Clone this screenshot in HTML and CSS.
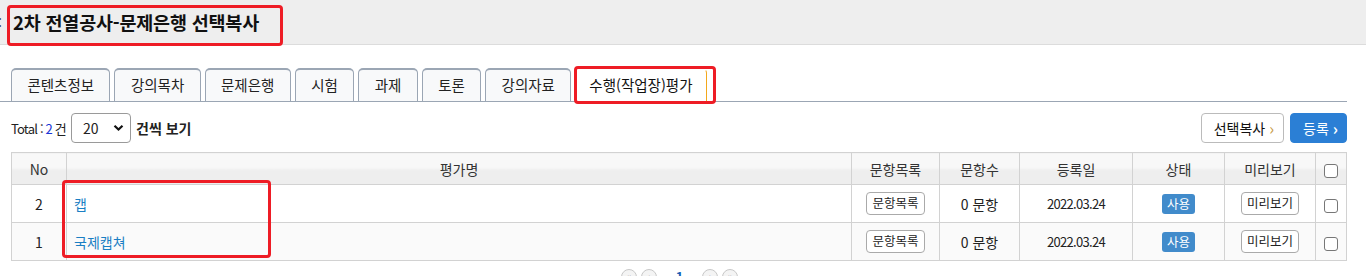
FILE: index.html
```html
<!DOCTYPE html>
<html lang="ko">
<head>
  <meta charset="utf-8">
  <title>문제은행 선택복사</title>
  <link rel="stylesheet" href="styles.css">
</head>
<body>

<div class="page-head">
  <span class="cut">:</span>
  <h2 class="title">2차 전열공사-문제은행 선택복사</h2>
  <div class="mark mark-title"></div>
</div>

<!-- ============================================================ tabs -->
<ul class="tabs">
  <li class="tab">콘텐츠정보</li>
  <li class="tab">강의목차</li>
  <li class="tab">문제은행</li>
  <li class="tab">시험</li>
  <li class="tab">과제</li>
  <li class="tab">토론</li>
  <li class="tab">강의자료</li>
  <li class="tab on">수행(작업장)평가
    <div class="mark mark-tab"></div>
  </li>
</ul>

<!-- ============================================================ toolbar -->
<div class="toolbar">
  <div class="left">
    <span class="total">Total : <span class="num">2</span> 건</span>
    <div class="sel">
      <span>20</span>
      <svg width="11" height="8" viewBox="0 0 11 8"><path d="M1.5 1.8 L5.5 5.6 L9.5 1.8" fill="none" stroke="#111" stroke-width="2.2"/></svg>
    </div>
    <b class="per">건씩 보기</b>
  </div>
  <div class="right">
    <a class="btn">선택복사 <i class="arr">›</i></a>
    <a class="btn blue">등록 <i class="arr">›</i></a>
  </div>
</div>

<!-- ============================================================ list -->
<div class="list">
  <table class="grid">
    <colgroup>
      <col class="c-no"><col class="c-name"><col class="c-items"><col class="c-cnt">
      <col class="c-date"><col class="c-state"><col class="c-prev"><col class="c-chk">
    </colgroup>
    <tr>
      <th>No</th><th>평가명</th><th>문항목록</th><th>문항수</th>
      <th>등록일</th><th>상태</th><th>미리보기</th><th><span class="chk"></span></th>
    </tr>
    <tr>
      <td>2</td>
      <td class="name"><a>캡</a></td>
      <td><a class="sbtn">문항목록</a></td>
      <td class="cnt">0 문항</td>
      <td class="date">2022.03.24</td>
      <td><span class="badge">사용</span></td>
      <td><a class="sbtn">미리보기</a></td>
      <td><span class="chk"></span></td>
    </tr>
    <tr class="alt">
      <td>1</td>
      <td class="name"><a>국제캡쳐</a></td>
      <td><a class="sbtn">문항목록</a></td>
      <td class="cnt">0 문항</td>
      <td class="date">2022.03.24</td>
      <td><span class="badge">사용</span></td>
      <td><a class="sbtn">미리보기</a></td>
      <td><span class="chk"></span></td>
    </tr>
  </table>
  <div class="mark mark-name"></div>
</div>

<!-- ============================================================ paging -->
<div class="paging">
  <span class="pg">«</span>
  <span class="pg">‹</span>
  <span class="cur">1</span>
  <span class="pg">›</span>
  <span class="pg">»</span>
</div>

</body>
</html>
```

FILE: styles.css
```css
body { margin:0; font-family:"Noto Sans CJK KR", "Noto Sans", sans-serif; font-size:13px; color:#222; background:#fff; overflow:hidden; }

/* red annotation boxes drawn over the page */
.mark { position:absolute; border:3px solid #ee1c25; border-radius:4px; pointer-events:none; }

.page-head { position:relative; height:44px; background:#eeeeee; border-bottom:1px solid #dcdcdc; display:flex; align-items:center; }
.cut { width:4px; overflow:hidden; font-size:14px; color:#444; margin-left:-2px; }
.title { margin:0 0 0 11px; font-size:18.5px; font-weight:bold; color:#111; letter-spacing:-0.2px; padding-bottom:1px; }
.mark-title { left:7px; top:5px; width:270px; height:35px; }

.tabs { list-style:none; margin:23px 19px 0 0; padding:0 0 0 11px; display:flex; gap:4px; border-bottom:1px solid #9ba6b4; height:33px; }
.tab { position:relative; height:31px; line-height:30px; padding:0 15.4px; border:1px solid #9ba6b4; border-top-width:2px; border-bottom:none; border-radius:5px 5px 0 0; background:#f8f9fa; font-size:14.5px; color:#222; text-align:center; }
.tab.on { background:#fff; border-color:#f3a81c; border-top-color:#fff; padding:0 13px; height:33px; margin-bottom:-1px; color:#111; }
.mark-tab { left:-2px; top:-4px; width:136px; height:32px; }

.toolbar { display:flex; justify-content:space-between; align-items:center; margin:11px 19px 0 11px; height:30px; }
.left, .right { display:flex; align-items:center; }
.total { font-size:13px; letter-spacing:-0.8px; color:#222; }
.num { color:#1b35d6; }
.sel { display:flex; align-items:center; justify-content:space-between; width:41px; height:28px; padding:0 6px 0 11px; margin-left:5px; border:1px solid #9a9a9a; border-radius:4px; font-size:14px; }
.per { margin-left:5px; font-size:14px; }
.btn { display:flex; align-items:center; height:28px; padding:0 9px 0 12px; margin-left:6px; border:1px solid #bbb; border-radius:4px; background:#fff; font-size:14px; color:#111; }
.btn.blue { background:#2b7fd5; border-color:#2b7fd5; color:#fff; padding:0 8px 0 12px; }
.arr { font-style:normal; margin-left:4px; font-size:16px; color:#c79a45; }
.blue .arr { color:#fff; font-weight:bold; }

.list { position:relative; margin:9px 19px 0 11px; }
.grid { width:100%; border-collapse:collapse; table-layout:fixed; border:1px solid #d2d2d2; }
.c-no { width:55px; } .c-items { width:88px; } .c-cnt { width:80px; } .c-date { width:113px; }
.c-state { width:92px; } .c-prev { width:91px; } .c-chk { width:31px; }
.grid th { height:31px; padding:0; font-size:14px; font-weight:normal; color:#333; border:1px solid #d2d2d2; background:linear-gradient(#f8f8f8 45%, #eeeeee 55%); }
.grid td { height:37px; padding:0; text-align:center; font-size:14px; border:1px solid #d2d2d2; }
.grid tr.alt td { background:#fafafa; }
.grid td.name { text-align:left; padding-left:7px; }
.name a { color:#1a7fc4; font-size:14px; }
.date { font-size:13px !important; letter-spacing:-0.7px; }
.sbtn { display:inline-block; height:21px; line-height:20px; padding:0 5px; border:1px solid #aaa; border-radius:4px; background:#fff; font-size:12.5px; color:#222; }
.badge { display:inline-block; height:20px; line-height:20px; padding:0 5px; border-radius:3px; background:#418bcb; color:#fff; font-size:12.5px; }
.chk { display:inline-block; width:12px; height:12px; border:1px solid #777; border-radius:3px; background:#fff; vertical-align:middle; }
.mark-name { left:51px; top:28px; width:203px; height:72px; }

.paging { display:flex; justify-content:center; align-items:center; gap:4px; margin:6px 0 0 -7px; }
.pg { width:14px; height:14px; line-height:13px; border:1px solid #c8c8c8; border-radius:50%; background:#f4f4f4; font-size:11px; color:#777; text-align:center; }
.cur { margin:0 15px; font-size:13px; font-weight:bold; color:#1a5fb4; }
```
